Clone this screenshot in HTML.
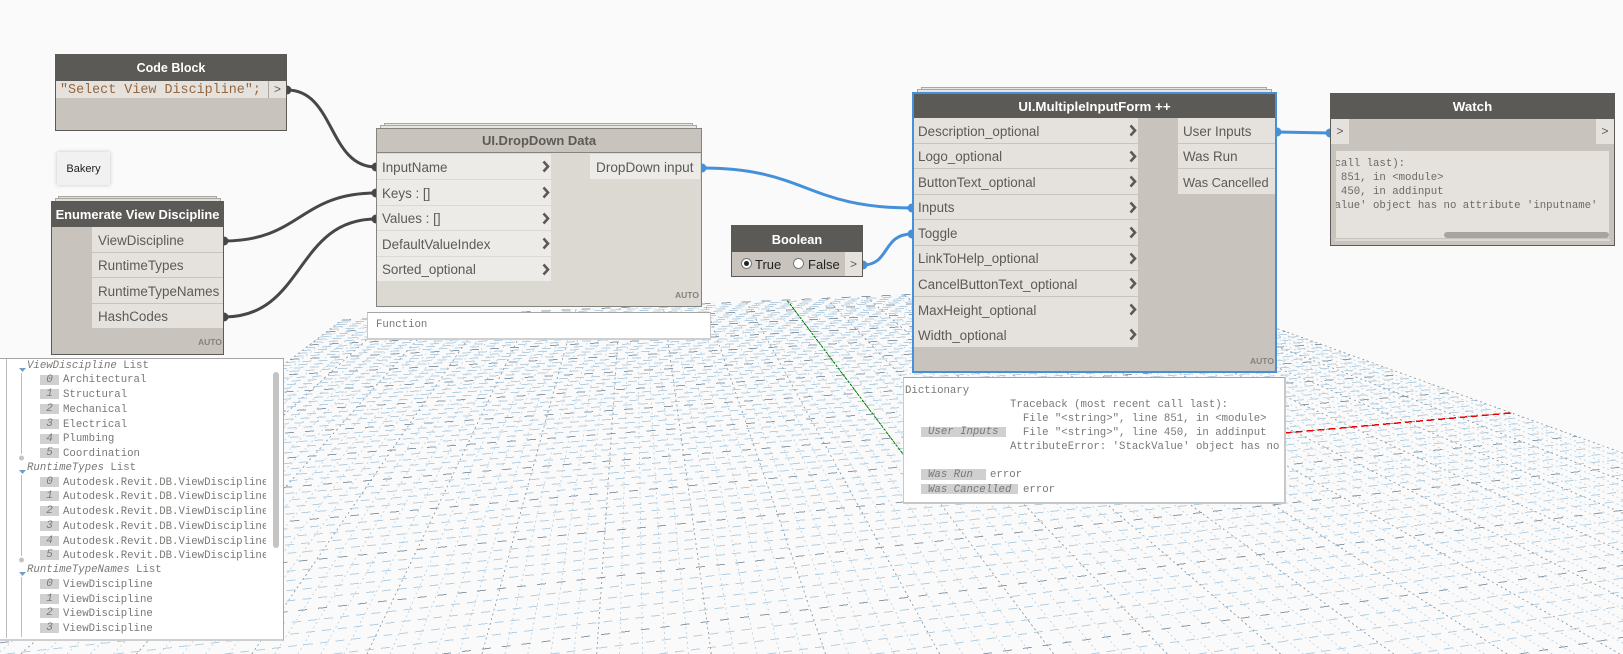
<!DOCTYPE html>
<html><head><meta charset="utf-8"><title>Dynamo graph</title>
<style>
html,body{margin:0;padding:0;background:#fafafa;width:1623px;height:654px;overflow:hidden}
#c{position:relative;width:1623px;height:654px;overflow:hidden;background:#fafafa;font-family:"Liberation Sans",sans-serif}
#c div,#c svg{position:absolute}
.n{background:#c8c4bd;border:1px solid #5c5a57;box-sizing:border-box}
.h{background:#5c5a57;color:#fff;font-weight:bold;font-size:13.2px;text-align:center;box-sizing:border-box;white-space:nowrap;padding-top:1px}
.r{background:#e5e2dd;color:#5c5a57;font-size:13.4px;white-space:nowrap;box-sizing:border-box;padding-top:1px}
.s{border:1px solid #a9a7a2;border-bottom:none;box-sizing:border-box;background:#e0ddd8}
.a{font-size:8.5px;font-weight:bold;color:#85827d;white-space:nowrap}
.m{font-family:"Liberation Mono",monospace;font-size:10.7px;line-height:14px;color:#7a7875;white-space:pre}
.i{font-style:italic}
.b{background:#d0d0d0;height:10px}
.g{font-family:"Liberation Mono",monospace;font-size:11px;font-style:italic;color:#7a7875;text-align:center;line-height:10px;background:#d0d0d0;width:19px;height:10px;left:40px}
.p{background:#fff;box-sizing:border-box}
</style></head><body>
<div id="c">
<svg id="grid" width="1623" height="654" style="left:0;top:0" shape-rendering="crispEdges"></svg>

<!-- Wires (beneath nodes so the nubs read as half circles) -->
<svg width="1623" height="654" style="left:0;top:0" fill="none">
<g stroke="#474745" stroke-width="3">
<path d="M287 90C335 90 328 167 376 167"/>
<path d="M224 241C300 241 300 193 376 193"/>
<path d="M224 317C305 317 295 219 376 219"/>
</g>
<g fill="#474745">
<circle cx="287" cy="90" r="4.500"/><circle cx="376" cy="167" r="4.500"/>
<circle cx="224" cy="241" r="4.500"/><circle cx="376" cy="193" r="4.500"/>
<circle cx="224" cy="317" r="4.500"/><circle cx="376" cy="219" r="4.500"/>
</g>
<g stroke="#4590d8" stroke-width="3">
<path d="M702 168C806 168 806 208 912 208"/>
<path d="M863 265C890 265 882 234 912 234"/>
<path d="M1277 132L1330 133"/>
</g>
<g fill="#4590d8">
<circle cx="702" cy="168" r="4.500"/><circle cx="912" cy="208" r="4.500"/>
<circle cx="863" cy="265" r="4.500"/><circle cx="912" cy="234" r="4.500"/>
<circle cx="1277" cy="132" r="4.500"/><circle cx="1330" cy="133" r="4.500"/>
</g>
</svg>

<!-- Code Block -->
<div class="n" style="left:55px;top:54px;width:232px;height:77px"></div>
<div class="h" style="left:55px;top:54px;width:232px;height:27px;line-height:27px;font-size:12.5px">Code Block</div>
<div class="r" style="left:56px;top:81px;width:212px;height:17px"></div>
<div style="left:60px;top:82px;font-family:'Liberation Mono',monospace;font-size:13.4px;line-height:17px;color:#96673f;white-space:pre">"Select View Discipline";</div>
<div style="left:268px;top:81px;width:1px;height:17px;background:#a9a7a2"></div>
<div class="r" style="left:269px;top:81px;width:17px;height:17px;font-family:'Liberation Mono',monospace;font-size:12px;line-height:17px;text-align:center">&gt;</div>

<!-- Note -->
<div style="left:57px;top:152px;width:53px;height:33px;background:#f1f1f1;box-shadow:0 0 4px rgba(0,0,0,.22);font-size:11px;line-height:35px;text-align:center;color:#222">Bakery</div>

<!-- Enumerate -->
<div class="s" style="left:58px;top:196px;width:159px;height:5px"></div>
<div class="s" style="left:55px;top:198px;width:166px;height:5px"></div>
<div class="n" style="left:51px;top:201px;width:173px;height:154px"></div>
<div class="h" style="left:51px;top:201px;width:173px;height:26px;line-height:26px;font-size:12.9px">Enumerate View Discipline</div>
<div class="r" style="left:92px;top:227px;width:131px;height:25px;line-height:25px;padding-left:6px">ViewDiscipline</div>
<div class="r" style="left:92px;top:253px;width:131px;height:24px;line-height:24px;padding-left:6px">RuntimeTypes</div>
<div class="r" style="left:92px;top:278px;width:131px;height:25px;line-height:25px;padding-left:6px;font-size:13.4px">RuntimeTypeNames</div>
<div class="r" style="left:92px;top:304px;width:131px;height:24px;line-height:24px;padding-left:6px">HashCodes</div>
<div class="a" style="left:198px;top:337px">AUTO</div>

<!-- DropDown -->
<div class="s" style="left:384px;top:123px;width:309px;height:6px;background:#e8e6e2"></div>
<div class="s" style="left:380px;top:125px;width:317px;height:6px;background:#e8e6e2"></div>
<div class="n" style="left:376px;top:128px;width:326px;height:179px;background:#dcd9d3;border-color:#85837e"></div>
<div class="h" style="left:377px;top:129px;width:324px;height:24px;line-height:24px;background:#c8c4bd;color:#5c5a57;border-bottom:1px solid #85837e;font-size:13px;padding-top:0">UI.DropDown Data</div>
<div class="r" style="left:377px;top:154px;width:174px;height:25px;line-height:25px;padding-left:5px;background:#ecebe7">InputName</div>
<div class="r" style="left:377px;top:180px;width:174px;height:25px;line-height:25px;padding-left:5px;background:#ecebe7">Keys : []</div>
<div class="r" style="left:377px;top:206px;width:174px;height:24px;line-height:24px;padding-left:5px;background:#ecebe7">Values : []</div>
<div class="r" style="left:377px;top:231px;width:174px;height:25px;line-height:25px;padding-left:5px;background:#ecebe7">DefaultValueIndex</div>
<div class="r" style="left:377px;top:257px;width:174px;height:24px;line-height:24px;padding-left:5px;background:#ecebe7">Sorted_optional</div>
<div class="r" style="left:590px;top:154px;width:110px;height:25px;line-height:25px;padding-left:6px;background:#ecebe7;font-size:13.6px">DropDown input</div>
<div class="a" style="left:675px;top:290px">AUTO</div>

<!-- Function preview -->
<div class="p" style="left:367px;top:312px;width:344px;height:28px;border-top:1px solid #a5a5a5;border-left:1px solid #c8c8c8;border-right:1px solid #c8c8c8;border-bottom:2px solid #cfcfcf"></div>
<div class="m" style="left:376px;top:318px">Function</div>

<!-- Boolean -->
<div class="n" style="left:731px;top:225px;width:132px;height:52px"></div>
<div class="h" style="left:731px;top:225px;width:132px;height:27px;line-height:27px;font-size:12.8px">Boolean</div>
<div style="left:741px;top:258px;width:11px;height:11px;border-radius:50%;background:#fff;border:1px solid #777;box-sizing:border-box"></div>
<div style="left:744px;top:261px;width:5px;height:5px;border-radius:50%;background:#222"></div>
<div style="left:755px;top:256px;font-size:13px;line-height:18px;color:#222">True</div>
<div style="left:793px;top:258px;width:11px;height:11px;border-radius:50%;background:#fff;border:1px solid #777;box-sizing:border-box"></div>
<div style="left:808px;top:256px;font-size:13px;line-height:18px;color:#222">False</div>
<div class="r" style="left:845px;top:252px;width:17px;height:24px;font-family:'Liberation Mono',monospace;font-size:12px;line-height:24px;text-align:center">&gt;</div>

<!-- Multiple input form -->
<div class="s" style="left:921px;top:87px;width:346px;height:6px;background:#e8e6e2"></div>
<div class="s" style="left:917px;top:89px;width:355px;height:6px;background:#e8e6e2"></div>
<div class="n" style="left:912px;top:92px;width:365px;height:281px;border:2px solid #4590d8"></div>
<div class="h" style="left:914px;top:94px;width:361px;height:24px;line-height:24px;font-size:13.3px">UI.MultipleInputForm ++</div>
<div class="r" style="left:914px;top:118px;width:224px;height:25px;line-height:25px;padding-left:4px">Description_optional</div>
<div class="r" style="left:914px;top:144px;width:224px;height:24px;line-height:24px;padding-left:4px">Logo_optional</div>
<div class="r" style="left:914px;top:169px;width:224px;height:25px;line-height:25px;padding-left:4px">ButtonText_optional</div>
<div class="r" style="left:914px;top:195px;width:224px;height:24px;line-height:24px;padding-left:4px">Inputs</div>
<div class="r" style="left:914px;top:220px;width:224px;height:25px;line-height:25px;padding-left:4px">Toggle</div>
<div class="r" style="left:914px;top:246px;width:224px;height:24px;line-height:24px;padding-left:4px">LinkToHelp_optional</div>
<div class="r" style="left:914px;top:271px;width:224px;height:25px;line-height:25px;padding-left:4px">CancelButtonText_optional</div>
<div class="r" style="left:914px;top:297px;width:224px;height:25px;line-height:25px;padding-left:4px">MaxHeight_optional</div>
<div class="r" style="left:914px;top:322px;width:224px;height:25px;line-height:25px;padding-left:4px">Width_optional</div>
<div class="r" style="left:1178px;top:118px;width:97px;height:25px;line-height:25px;padding-left:5px">User Inputs</div>
<div class="r" style="left:1178px;top:144px;width:97px;height:24px;line-height:24px;padding-left:5px">Was Run</div>
<div class="r" style="left:1178px;top:169px;width:97px;height:25px;line-height:25px;padding-left:5px;font-size:12.8px">Was Cancelled</div>
<div class="a" style="left:1250px;top:356px">AUTO</div>

<!-- Watch -->
<div class="n" style="left:1330px;top:93px;width:285px;height:153px"></div>
<div class="h" style="left:1330px;top:93px;width:285px;height:26px;line-height:26px;font-size:13.3px">Watch</div>
<div class="r" style="left:1331px;top:119px;width:18px;height:25px;font-family:'Liberation Mono',monospace;font-size:12px;line-height:25px;text-align:center">&gt;</div>
<div class="r" style="left:1596px;top:119px;width:18px;height:25px;font-family:'Liberation Mono',monospace;font-size:12px;line-height:25px;text-align:center">&gt;</div>
<div style="left:1336px;top:151px;width:273px;height:87px;background:#e5e2dd;overflow:hidden">
<div class="m" style="left:-149px;top:6px;color:#6b6965">Traceback (most recent call last):
  File "&lt;string&gt;", line 851, in &lt;module&gt;
  File "&lt;string&gt;", line 450, in addinput
AttributeError: 'StackValue' object has no attribute 'inputname'</div>
<div style="left:108px;top:81px;width:165px;height:6px;background:#a8a5a0;border-radius:3px"></div>
</div>
<div style="left:1335px;top:239px;width:275px;height:2px;background:#dcd9d3"></div>

<!-- Chevrons -->
<svg width="1623" height="654" style="left:0;top:0" fill="none">
<g stroke="#5c5a57" stroke-width="2.6">
<path d="M543.500 161.500L548 166.500L543.500 171.500"/><path d="M543.500 187.500L548 192.500L543.500 197.500"/><path d="M543.500 213.500L548 218.500L543.500 223.500"/><path d="M543.500 238.500L548 243.500L543.500 248.500"/><path d="M543.500 264.500L548 269.500L543.500 274.500"/>
<path d="M1130.500 125.500L1135 130.500L1130.500 135.500"/><path d="M1130.500 151.500L1135 156.500L1130.500 161.500"/><path d="M1130.500 176.500L1135 181.500L1130.500 186.500"/><path d="M1130.500 202.500L1135 207.500L1130.500 212.500"/><path d="M1130.500 227.500L1135 232.500L1130.500 237.500"/><path d="M1130.500 253.500L1135 258.500L1130.500 263.500"/><path d="M1130.500 278.500L1135 283.500L1130.500 288.500"/><path d="M1130.500 304.500L1135 309.500L1130.500 314.500"/><path d="M1130.500 329.500L1135 334.500L1130.500 339.500"/>
</g>
</svg>

<!-- Dictionary preview -->
<div class="p" style="left:903px;top:377px;width:383px;height:127px;border-top:1px solid #a5a5a5;border-left:1px solid #c8c8c8;border-right:2px solid #c8c8c8;border-bottom:2px solid #c8c8c8;overflow:hidden"></div>
<div style="left:904px;top:378px;width:380px;height:124px;overflow:hidden">
<div class="m" style="left:1px;top:6px">Dictionary</div>
<div class="m" style="left:106px;top:20px">Traceback (most recent call last):
  File "&lt;string&gt;", line 851, in &lt;module&gt;
  File "&lt;string&gt;", line 450, in addinput
AttributeError: 'StackValue' object has no</div>
<div class="b" style="left:17px;top:49px;width:85px"></div>
<div class="m i" style="left:24px;top:47px">User Inputs</div>
<div class="b" style="left:17px;top:91px;width:65px;height:11px"></div>
<div class="m i" style="left:24px;top:90px">Was Run</div>
<div class="m" style="left:86px;top:90px">error</div>
<div class="b" style="left:17px;top:106px;width:97px"></div>
<div class="m i" style="left:24px;top:105px">Was Cancelled</div>
<div class="m" style="left:119px;top:105px">error</div>
</div>

<!-- Left list preview -->
<div class="p" style="left:-2px;top:358px;width:286px;height:283px;border-top:1px solid #a5a5a5;border-right:1px solid #aaa;border-bottom:2px solid #cfcfcf"></div>
<div style="left:6px;top:359px;width:1px;height:279px;background:#bdbdbd"></div>
<svg width="30" height="290" style="left:10px;top:358px">
<g fill="#6fa0cc"><path d="M9 10H16L12.500 14Z"/><path d="M9 112H16L12.500 116Z"/><path d="M9 214H16L12.500 218Z"/></g>
<g stroke="#bdbdbd"><path d="M11.500 15V96M11.500 117V198M11.500 219V279"/></g>
<g fill="#c4c4c4"><circle cx="11.500" cy="100" r="2.500"/><circle cx="11.500" cy="202" r="2.500"/></g>
</svg>
<div class="m" style="left:27px;top:359px"><span class="i">ViewDiscipline</span> List</div>
<div class="g" style="top:375px">0</div><div class="m" style="left:63px;top:373px">Architectural</div>
<div class="g" style="top:389px">1</div><div class="m" style="left:63px;top:388px">Structural</div>
<div class="g" style="top:404px">2</div><div class="m" style="left:63px;top:403px">Mechanical</div>
<div class="g" style="top:419px">3</div><div class="m" style="left:63px;top:418px">Electrical</div>
<div class="g" style="top:434px">4</div><div class="m" style="left:63px;top:432px">Plumbing</div>
<div class="g" style="top:448px">5</div><div class="m" style="left:63px;top:447px">Coordination</div>
<div class="m" style="left:27px;top:461px"><span class="i">RuntimeTypes</span> List</div>
<div class="g" style="top:477px">0</div>
<div class="g" style="top:491px">1</div>
<div class="g" style="top:506px">2</div>
<div class="g" style="top:521px">3</div>
<div class="g" style="top:536px">4</div>
<div class="g" style="top:550px">5</div>
<div style="left:63px;top:476px;width:203px;height:90px;overflow:hidden">
<div class="m" style="left:0;top:0">Autodesk.Revit.DB.ViewDiscipline</div>
<div class="m" style="left:0;top:14px">Autodesk.Revit.DB.ViewDiscipline</div>
<div class="m" style="left:0;top:29px">Autodesk.Revit.DB.ViewDiscipline</div>
<div class="m" style="left:0;top:44px">Autodesk.Revit.DB.ViewDiscipline</div>
<div class="m" style="left:0;top:59px">Autodesk.Revit.DB.ViewDiscipline</div>
<div class="m" style="left:0;top:73px">Autodesk.Revit.DB.ViewDiscipline</div>
</div>
<div class="m" style="left:27px;top:563px"><span class="i">RuntimeTypeNames</span> List</div>
<div class="g" style="top:579px">0</div><div class="m" style="left:63px;top:578px">ViewDiscipline</div>
<div class="g" style="top:594px">1</div><div class="m" style="left:63px;top:593px">ViewDiscipline</div>
<div class="g" style="top:608px">2</div><div class="m" style="left:63px;top:607px">ViewDiscipline</div>
<div class="g" style="top:623px">3</div><div class="m" style="left:63px;top:622px">ViewDiscipline</div>
<div style="left:273px;top:372px;width:6px;height:176px;background:#c4c4c4;border-radius:3px"></div>
</div>
<script>
(function(){
var a=[870,20.8,.179],b=[518,79.2,.817],W=1623,H=654;
function P(u,v){var d=1+a[2]*u+b[2]*v;return [(912+a[0]*u+b[0]*v)/d,(466+a[1]*u+b[1]*v)/d];}
function minV(u){return Math.max(-1,(.12-1-a[2]*u)/b[2]);}
function minU(v){return Math.max(-1,(.12-1-b[2]*v)/a[2]);}
function clip(p,q){var t0=0,t1=1,dx=q[0]-p[0],dy=q[1]-p[1];
 var P_=[-dx,dx,-dy,dy],Q_=[p[0],W-p[0],p[1],H-p[1]];
 for(var k=0;k<4;k++){if(P_[k]===0){if(Q_[k]<0)return null;continue;}
  var r=Q_[k]/P_[k];
  if(P_[k]<0){if(r>t1)return null;if(r>t0)t0=r;}else{if(r<t0)return null;if(r<t1)t1=r;}}
 return [[p[0]+t0*dx,p[1]+t0*dy],[p[0]+t1*dx,p[1]+t1*dy]];}
var o=[];
function L(p,q,c,w,d){var s=clip(p,q);if(!s)return;p=s[0];q=s[1];
 o.push('<line x1="'+p[0].toFixed(1)+'" y1="'+p[1].toFixed(1)+'" x2="'+q[0].toFixed(1)+'" y2="'+q[1].toFixed(1)+'" stroke="'+c+'" stroke-width="'+w+'" stroke-dasharray="'+d+'"/>');}
var N=50,i,t;
for(i=-N;i<=N;i++){if(i%5===0)continue;t=i/N;
 L(P(t,minV(t)),P(t,1),'#c4d9e7',1,'2 3');
 L(P(minU(t),t),P(1,t),'#b6d0e2',1,'9 7');}
for(i=-N;i<=N;i+=5){t=i/N;
 L(P(t,minV(t)),P(t,1),'#98a7b3',1,'2 3');
 L(P(minU(t),t),P(1,t),'#8b9ba9',1,'9 11');}
L(P(0,0),P(0,1),'#008000',1,'3 1');
L(P(0,0),P(1,0),'#f00000',1.5,'7 4');
document.getElementById('grid').innerHTML=o.join('');
})();
</script>
</body></html>
